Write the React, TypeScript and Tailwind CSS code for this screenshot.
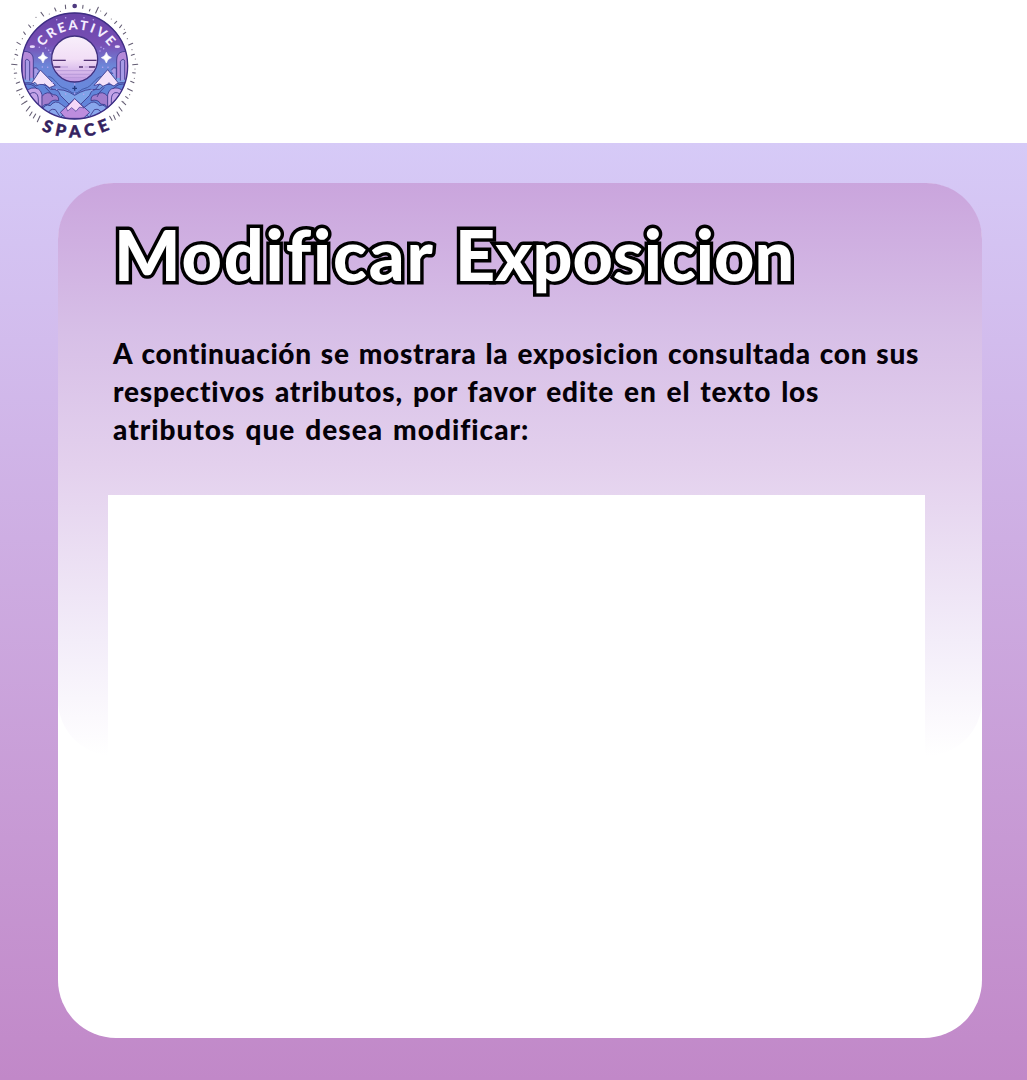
const ticks: [number, number, number, number][] = [
  [196, 15, 197, 26], [164, 24, 168, 33], [123, 37, 131, 48], [86, 75, 92, 82], [71, 96, 76, 103],
  [51, 127, 61, 133], [45, 163, 53, 166], [35, 193, 51, 194], [43, 220, 50, 219], [49, 250, 59, 246],
  [50, 273, 66, 266], [64, 294, 71, 289], [65, 313, 81, 303], [79, 333, 90, 319], [89, 347, 96, 336],
  [100, 354, 107, 342], [112, 365, 120, 348], [249, 16, 248, 25], [270, 28, 268, 33], [295, 22, 287, 39],
  [320, 39, 314, 47], [350, 64, 344, 70], [365, 75, 359, 83], [377, 97, 370, 102], [398, 130, 386, 135],
  [403, 163, 394, 166], [413, 193, 398, 194], [406, 219, 398, 218], [402, 248, 392, 244], [397, 273, 383, 266],
  [384, 295, 377, 290], [377, 314, 366, 304], [366, 333, 357, 321], [358, 348, 351, 336], [346, 358, 341, 346],
  [336, 361, 329, 349],
];

const dots: [number, number][] = [
  [148, 42], [181, 34], [108, 52], [100, 77], [67, 116], [49, 149], [43, 177], [43, 207], [45, 235],
  [59, 284], [75, 306], [302, 33], [334, 57], [373, 88], [382, 116], [396, 149], [406, 177], [405, 207],
  [403, 235], [389, 284], [371, 306],
];

const speckles: [number, number][] = [
  [118, 142], [137, 144], [146, 151], [151, 158], [170, 59], [197, 53], [224, 60], [252, 53], [280, 59],
  [303, 142], [311, 146], [300, 153], [157, 248], [170, 268], [288, 253], [276, 270], [197, 282],
  [251, 283], [143, 202], [308, 202], [224, 252], [224, 280], [127, 201], [324, 202],
];

function Scenery() {
  return (
    <g stroke="#3d3a8c" strokeWidth="2.6">
      <path d="M64 226Q98 208 121 225L160 271Q191 263 224 286Q258 264 286 269L326 218L385 227V360H64Z" fill="#7fa3e8" />
      <path d="M91 255L121 210L166 256L148 263L134 252L119 263L105 247Z" fill="#f3e1fa" />
      <path d="M282 256L323 209L359 254L343 264L327 248L313 262L300 252Z" fill="#f3e1fa" />
      <path d="M66 237V168Q66 151 82 155Q100 159 100 180V233" fill="#b58ad9" />
      <path d="M76 239V184Q78 172 89 184V242M101 238V204Q110 199 116 211" fill="#a79be6" />
      <path d="M384 237V168Q384 151 368 155Q350 159 350 180V233" fill="#b58ad9" />
      <path d="M374 239V184Q372 172 361 184V242M349 238V204Q340 199 334 211" fill="#a79be6" />
      <path d="M66 251Q93 242 108 258Q128 244 152 268Q176 265 181 286L208 313L179 354H113L72 296Z" fill="#6285da" />
      <path d="M384 251Q357 242 342 258Q322 244 298 268Q274 265 269 286L242 313L271 354H337L378 296Z" fill="#6285da" />
      <path d="M73 287Q82 261 106 264Q127 267 127 296V341Q104 330 89 312Z" fill="#c3a3e8" />
      <path d="M376 287Q367 261 343 264Q322 267 322 296V341Q345 330 360 312Z" fill="#c3a3e8" />
      <path d="M82 298Q88 275 104 278Q115 281 115 300V333M92 308Q97 290 105 303V326M367 298Q361 275 345 278Q334 281 334 300V333M357 308Q352 290 344 303V326" fill="none" />
      <path d="M126 289Q141 270 160 284Q177 284 176 302Q155 296 147 312Q132 311 126 322Z" fill="#a07dcd" />
      <path d="M323 289Q308 270 289 284Q272 284 273 302Q294 296 302 312Q317 311 323 322Z" fill="#a07dcd" />
      <path d="M125 336Q132 309 151 317Q166 297 184 313L207 330L181 352L146 350Z" fill="#88a6ec" />
      <path d="M324 336Q317 309 298 317Q283 297 265 313L242 330L268 352L303 350Z" fill="#88a6ec" />
      <path d="M144 345Q148 323 166 329L179 348M305 345Q301 323 283 329L270 348" fill="none" />
      <path d="M181 337L224 296L269 337L250 355H197Z" fill="#bd8dde" />
      <path d="M199 324L224 296L252 324L239 321L228 334L215 323L203 333Z" fill="#f6d8f8" strokeWidth="2" />
      <path d="M70 254Q96 247 111 267M136 262Q153 277 158 291M340 267Q354 247 381 254M313 262Q296 277 291 291" fill="none" />
      <path d="M145 229C166 233 174 262 194 265C208 268 212 280 224 280C236 280 242 267 255 265C276 261 284 233 305 229" fill="none" stroke="#3e529f" />
    </g>
  );
}

function Logo() {
  return (
    <svg className="block h-[143px] w-[150px]" viewBox="0 0 450 429" role="img" aria-label="Creative Space">
      <defs>
        <linearGradient id="sky" x1="0" y1="0" x2="0" y2="1">
          <stop offset="0" stopColor="#6843a8" />
          <stop offset=".3" stopColor="#7850b5" />
          <stop offset=".5" stopColor="#6d86d8" />
          <stop offset="1" stopColor="#638ce2" />
        </linearGradient>
        <linearGradient id="moon" x1="0" y1="0" x2="0" y2="1">
          <stop stopColor="#f8effb" />
          <stop offset=".5" stopColor="#f2def6" />
          <stop offset="1" stopColor="#c19ae2" />
        </linearGradient>
        <clipPath id="badge"><circle cx="224" cy="198" r="159" /></clipPath>
        <clipPath id="disc"><circle cx="224" cy="177" r="66" /></clipPath>
        <path id="upper" d="M129 141A122 122 0 0 1 329 141" />
        <path id="lower" d="M119 388Q224 440 342 382" />
      </defs>
      <circle cx="224" cy="198" r="160" fill="url(#sky)" />
      <g clipPath="url(#badge)"><Scenery /></g>
      <circle cx="224" cy="198" r="159" fill="none" stroke="#3e2e83" strokeWidth="4" />
      <circle cx="224" cy="177" r="69" fill="url(#moon)" stroke="#413180" strokeWidth="4" />
      <g clipPath="url(#disc)" stroke="#b99ad9" strokeWidth="3">
        <path d="M155 181H198M249 181H295M155 201H204M254 201H292M159 212H290M168 223H280M185 233H267" />
        <path d="M155 181H197M252 181H295M155 201H181M237 201H249M267 201H293" stroke="#513171" strokeWidth="4" />
      </g>
      {speckles.map(([x, y]) => <circle key={`${x}-${y}`} cx={x} cy={y} r="2.3" fill="#b8a4ef" />)}
      <path d="M129 157Q131 170 143 173Q131 176 129 189Q126 176 114 173Q126 170 129 157ZM319 157Q322 170 334 173Q322 176 319 189Q316 176 304 173Q316 170 319 157Z" fill="#fff" stroke="#fff" strokeWidth="2" />
      <ellipse cx="97" cy="140" rx="8" ry="4" fill="#e9dbfa" />
      <ellipse cx="352" cy="140" rx="8" ry="4" fill="#e9dbfa" />
      <path d="M224 258V272M217 265H231" stroke="#243b80" strokeWidth="4" />
      <g stroke="#625b72" strokeWidth="3.2" strokeLinecap="round">
        {ticks.map(([x1, y1, x2, y2]) => <path key={`${x1}-${y1}`} d={`M${x1} ${y1}L${x2} ${y2}`} />)}
      </g>
      {dots.map(([x, y]) => <circle key={`${x}-${y}`} cx={x} cy={y} r="1.8" fill="#77717e" />)}
      <circle cx="224" cy="18" r="7" fill="#4e397f" />
      <text className="font-['Lato'] text-[39px] font-black" fill="#f4edff"><textPath href="#upper" textLength="232" lengthAdjust="spacing">CREATIVE</textPath></text>
      <text className="font-['Lato'] text-[50px] font-black" fill="#33215f" stroke="#33215f" strokeWidth="1.5"><textPath href="#lower" startOffset="5" textLength="213" lengthAdjust="spacing">SPACE</textPath></text>
    </svg>
  );
}

export default function App() {
  return (
    <div className="flex h-[1080px] w-full flex-col bg-white font-['Lato',sans-serif]">
      <header className="h-[143px] shrink-0 bg-white"><Logo /></header>
      <main className="flex-1 bg-linear-to-b from-[#d6caf7] to-[#c188c8] pt-10 pr-[45px] pl-[58px]">
        <section className="h-[855px] rounded-[58px] bg-white">
          <div className="h-[573px] rounded-[56px] bg-[linear-gradient(to_bottom,#caa5dd_0%,#d7bfe7_26%,#e3d0ed_49%,#f3edf9_80%,#ffffff_100%)] px-[50px] pt-[24px]">
            <h1 className="ml-[6px] flex h-[94px] items-center whitespace-nowrap text-[70px] leading-none font-black text-white [-webkit-text-stroke:7px_black] [font-variant-ligatures:none] [paint-order:stroke_fill]">
              <span className="w-[341px] tracking-[1.9px]">Modificar</span>
              <span>Exposicion</span>
            </h1>
            <p className="mt-[33px] ml-[5px] text-[28px] leading-[38px] font-black whitespace-nowrap text-[#050108]">
              <span className="block tracking-[0.7px] [word-spacing:1.7px]">A continuación se mostrara la exposicion consultada con sus</span>
              <span className="block tracking-[0.8px] [word-spacing:2.6px]">respectivos atributos, por favor edite en el texto los</span>
              <span className="block tracking-[1px] [word-spacing:2.4px]">atributos que desea modificar:</span>
            </p>
            <div className="mt-[47px] h-[400px] w-[817px] bg-white" />
          </div>
        </section>
      </main>
    </div>
  );
}
